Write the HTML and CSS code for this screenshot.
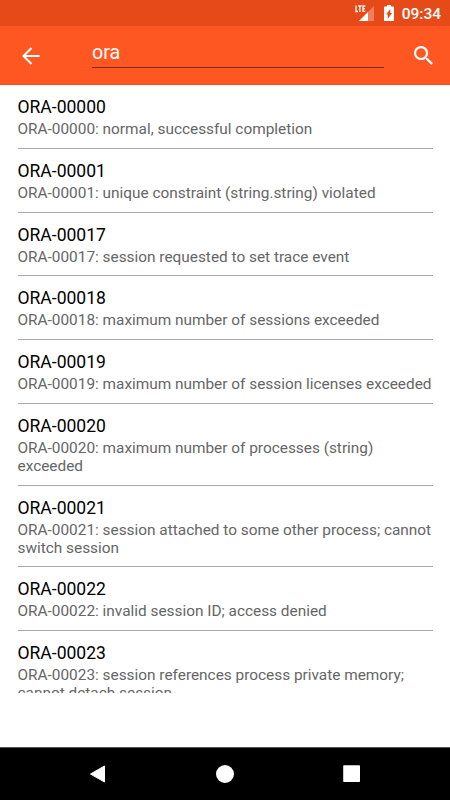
FILE: index.html
```html
<!DOCTYPE html>
<html lang="en">
<head>
    <meta charset="UTF-8">
    <meta name="viewport" content="width=device-width, initial-scale=1.0">
    <title>ORA Codes</title>
    <link rel="stylesheet" href="styles.css">
</head>
<body>
    <!-- Status bar -->
    <div class="status-bar">
        <svg class="signal" viewBox="0 0 20 18">
            <path d="M19 2v15H4z" fill="#fff" fill-opacity="0.3"></path>
            <path d="M13 8v9H4z" fill="#fff"></path>
            <path d="M1 1.5v6h2M3.2 2h3.4M4.9 2v6M10.3 2H8v5.4h2.3M8 4.7h2" fill="none" stroke="#fff" stroke-width="1.3"></path>
        </svg>
        <svg class="battery" viewBox="0 0 10 16">
            <path d="M3 0h4v1.6h2.2q.8 0 .8.8v12.8q0 .8-.8.8H.8q-.8 0-.8-.8V2.4q0-.8.8-.8H3z" fill="#fff"></path>
            <path d="M6.3 4v4H8l-4.2 6V9.6H2z" fill="#e64a19"></path>
        </svg>
        <span class="clock">09:34</span>
    </div>

    <!-- Search toolbar -->
    <header class="toolbar">
        <svg class="back" viewBox="0 0 18 18">
            <path d="M17.7 9H1.5M9.5 1 1.5 9l8 8" fill="none" stroke="#fff" stroke-width="2"></path>
        </svg>
        <div class="search-field">ora</div>
        <svg class="search" viewBox="3 3 17.5 17.5">
            <path d="M15.5 14h-.79l-.28-.27C15.41 12.59 16 11.11 16 9.5 16 5.91 13.09 3 9.5 3S3 5.91 3 9.5 5.91 16 9.5 16c1.61 0 3.09-.59 4.23-1.57l.27.28v.79l5 4.99L20.49 19l-4.99-5zm-6 0C7.01 14 5 11.99 5 9.5S7.01 5 9.5 5 14 7.01 14 9.5 11.99 14 9.5 14z" fill="#fff"></path>
        </svg>
    </header>

    <!-- Results -->
    <main class="results">
        <div class="item">
            <div class="code">ORA-00000</div>
            <div class="message">ORA-00000: normal, successful completion</div>
        </div>
        <div class="item">
            <div class="code">ORA-00001</div>
            <div class="message">ORA-00001: unique constraint (string.string) violated</div>
        </div>
        <div class="item">
            <div class="code">ORA-00017</div>
            <div class="message">ORA-00017: session requested to set trace event</div>
        </div>
        <div class="item">
            <div class="code">ORA-00018</div>
            <div class="message">ORA-00018: maximum number of sessions exceeded</div>
        </div>
        <div class="item">
            <div class="code">ORA-00019</div>
            <div class="message">ORA-00019: maximum number of session licenses exceeded</div>
        </div>
        <div class="item">
            <div class="code">ORA-00020</div>
            <div class="message">ORA-00020: maximum number of processes (string)<br>exceeded</div>
        </div>
        <div class="item">
            <div class="code">ORA-00021</div>
            <div class="message">ORA-00021: session attached to some other process; cannot<br>switch session</div>
        </div>
        <div class="item">
            <div class="code">ORA-00022</div>
            <div class="message">ORA-00022: invalid session ID; access denied</div>
        </div>
        <div class="item">
            <div class="code">ORA-00023</div>
            <div class="message">ORA-00023: session references process private memory;<br>cannot detach session</div>
        </div>
    </main>

    <!-- Navigation bar -->
    <nav class="nav-bar">
        <svg viewBox="0 0 18 18">
            <path d="M15.5 1v16L1.5 9z" fill="#fff" stroke="#fff" stroke-linejoin="round"></path>
        </svg>
        <svg viewBox="0 0 18 18">
            <circle cx="9" cy="9" r="9" fill="#fff"></circle>
        </svg>
        <svg viewBox="0 0 18 18">
            <rect x="0.2" y="0.3" width="16.8" height="16.8" rx="0.8" fill="#fff"></rect>
        </svg>
    </nav>
</body>
</html>
```
FILE: styles.css
```css
body {
    margin: 0;
    height: 800px;
    display: flex;
    flex-direction: column;
    overflow: hidden;
    background-color: #fff;
    font-family: Roboto, "Liberation Sans", sans-serif;
}

svg {
    display: block;
    flex: none;
}

.status-bar {
    box-sizing: border-box;
    height: 26px;
    flex: none;
    display: flex;
    align-items: center;
    justify-content: flex-end;
    padding-right: 9px;
    background-color: #e64a19;
    color: #fff;
}

.signal {
    width: 20px;
    height: 18px;
    margin-top: -1px;
}

.battery {
    width: 10px;
    height: 16px;
    margin: 0 8px 0 9px;
}

.clock {
    font-size: 15.5px;
    font-weight: 500;
    line-height: 26px;
    margin-top: 2px;
}

.toolbar {
    box-sizing: border-box;
    height: 59px;
    flex: none;
    display: flex;
    align-items: center;
    padding: 0 17px 0 22px;
    background-color: #ff5722;
    border-bottom: 1px solid #fa4c16;
}

.back {
    width: 18px;
    height: 18px;
    margin-top: 2px;
}

.search-field {
    box-sizing: border-box;
    width: 292px;
    height: 29px;
    margin: -4px auto 0 52px;
    border-bottom: 1px solid #7f2b11;
    color: #fff;
    font-size: 19.7px;
    line-height: 28px;
}

.search {
    width: 19px;
    height: 19px;
}

.results {
    height: 608px;
    flex: none;
    overflow: hidden;
    padding: 0 17.5px;
}

.item {
    box-sizing: border-box;
    padding: 12px 0 9.75px;
    border-bottom: 1px solid #aaa;
}

.code {
    color: #000;
    font-size: 17.55px;
    line-height: 21px;
    margin-bottom: 2px;
}

.message {
    color: #666;
    font-size: 15.38px;
    line-height: 18px;
    white-space: nowrap;
}

.nav-bar {
    box-sizing: border-box;
    height: 53px;
    flex: none;
    margin-top: auto;
    display: flex;
    align-items: center;
    justify-content: center;
    gap: 109px;
    background-color: #000;
    border-top: 1px solid #555;
}

.nav-bar svg {
    width: 18px;
    height: 18px;
}
```
